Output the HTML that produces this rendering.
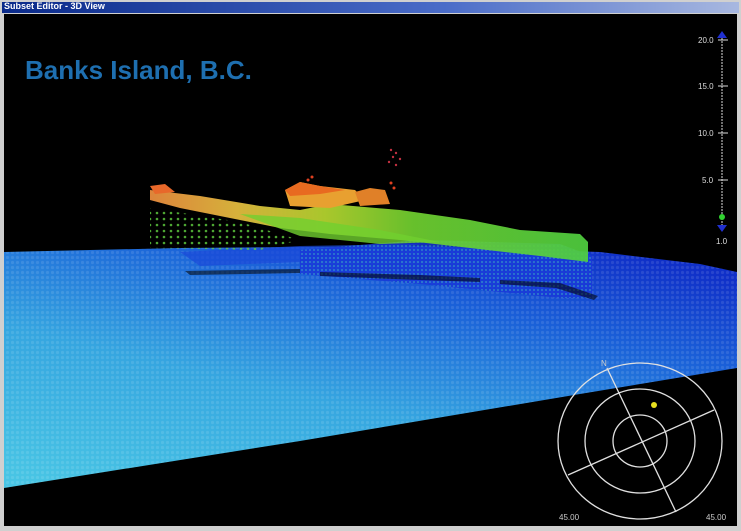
<!DOCTYPE html>
<html><head><style>
html,body{margin:0;padding:0;background:#000;}
.wrap{position:relative;width:741px;height:531px;overflow:hidden;background:#d0d0d0;}
.title{position:absolute;left:2px;top:2px;width:737px;height:11px;background:linear-gradient(90deg,#0a2a8a,#4a6cc8 60%,#a8b8e0);}
.title span{position:absolute;left:2px;top:-1px;font:bold 9px "Liberation Sans",sans-serif;color:#fff;}
svg{position:absolute;left:4px;top:14px;}
</style></head><body><div class="wrap">
<div class="title"><span>Subset Editor - 3D View</span></div>
<svg width="733" height="512" viewBox="4 14 733 512">
<defs>
<linearGradient id="sea" x1="0.1" y1="1" x2="0.8" y2="0">
<stop offset="0" stop-color="#48c4e4"/><stop offset="0.4" stop-color="#36a6e0"/><stop offset="0.75" stop-color="#1a60d8"/><stop offset="1" stop-color="#1030c8"/>
</linearGradient>
<linearGradient id="band" x1="0" y1="0" x2="1" y2="0">
<stop offset="0" stop-color="#f09040"/><stop offset="0.2" stop-color="#e8c040"/><stop offset="0.4" stop-color="#b8d830"/><stop offset="0.6" stop-color="#70d030"/><stop offset="1" stop-color="#50d040"/>
</linearGradient>
<pattern id="dots" width="5" height="5" patternUnits="userSpaceOnUse">
<circle cx="2.5" cy="2.5" r="1.6" fill="#fff" fill-opacity="0.1"/>
</pattern>
<pattern id="gdots" width="7" height="6" patternUnits="userSpaceOnUse">
<circle cx="3" cy="3" r="1.3" fill="#60d040"/>
</pattern>
<pattern id="bdots" width="4" height="4" patternUnits="userSpaceOnUse">
<rect width="4" height="4" fill="#1838d8"/><circle cx="2" cy="2" r="1" fill="#40c0c0" fill-opacity="0.6"/>
</pattern>
</defs>
<rect x="4" y="14" width="733" height="512" fill="#000"/>
<polygon points="4,252 180,248 420,246 600,252 700,264 737,272 737,368 580,394 300,441 4,488" fill="url(#sea)"/>
<polygon points="4,252 180,248 420,246 600,252 700,264 737,272 737,368 580,394 300,441 4,488" fill="url(#dots)"/>
<polygon points="180,252 300,246 420,244 300,262 200,266" fill="#1a48d8" opacity="0.7"/>
<!-- ship body (blue point cloud) -->
<polygon points="300,250 420,240 560,244 592,256 592,298 560,298 420,284 300,274" fill="url(#bdots)" opacity="0.85"/>
<!-- shadow streaks -->
<g fill="#000" opacity="0.55">
<polygon points="185,271 300,269 300,273 190,275"/>
<polygon points="320,272 420,275 480,278 480,282 420,280 320,276"/>
<polygon points="500,280 560,283 598,296 594,300 556,288 500,284"/>
</g>
<!-- sparse green dots under band -->
<polygon points="150,208 240,222 300,240 260,250 150,248" fill="url(#gdots)" opacity="0.8"/>
<!-- main band -->
<polygon points="150,190 200,196 260,206 300,210 330,204 400,210 470,220 520,230 550,232 580,234 588,242 588,262 540,256 470,248 400,240 330,234 280,228 230,218 180,208 150,200" fill="url(#band)" opacity="0.92"/>
<polygon points="240,214 300,218 380,230 440,242 380,244 300,236" fill="#70d030" opacity="0.8"/>
<!-- superstructure -->
<polygon points="285,190 300,182 320,186 355,190 365,200 330,208 290,206" fill="#e8a030"/>
<polygon points="285,190 300,182 320,186 345,190 320,194 290,196" fill="#e86a20"/>
<polygon points="355,192 370,188 385,190 390,204 360,206" fill="#e08028"/>
<polygon points="150,186 165,184 175,192 155,194" fill="#e8682a"/>
<g fill="#c03040"><circle cx="391" cy="150" r="1.2"/><circle cx="396" cy="153" r="1.2"/><circle cx="393" cy="157" r="1.2"/><circle cx="400" cy="159" r="1.2"/><circle cx="389" cy="162" r="1.2"/><circle cx="396" cy="165" r="1.2"/></g>
<g fill="#e04020"><circle cx="308" cy="180" r="1.5"/><circle cx="312" cy="177" r="1.5"/><circle cx="391" cy="183" r="1.5"/><circle cx="394" cy="188" r="1.5"/></g>
<!-- depth scale -->
<g stroke="#ddd" stroke-width="1" fill="#ddd" font-family="Liberation Sans,sans-serif" font-size="8">
<line x1="722" y1="38" x2="722" y2="228" stroke-dasharray="2,1"/>
<line x1="718" y1="40" x2="728" y2="40"/><line x1="718" y1="86" x2="728" y2="86"/>
<line x1="718" y1="133" x2="728" y2="133"/><line x1="718" y1="180" x2="728" y2="180"/>
<text x="698" y="43" stroke="none">20.0</text><text x="698" y="89" stroke="none">15.0</text>
<text x="698" y="136" stroke="none">10.0</text><text x="702" y="183" stroke="none">5.0</text>
<text x="716" y="244" stroke="none">1.0</text>
</g>
<polygon points="717,38 727,38 722,31" fill="#2030d0"/>
<polygon points="717,225 727,225 722,232" fill="#2030d0"/>
<circle cx="722" cy="217" r="3" fill="#30d030"/>
<!-- title text -->
<text x="25" y="79" font-family="Liberation Sans,sans-serif" font-weight="bold" font-size="26" fill="#1e6fb0">Banks Island, B.C.</text>
<!-- compass -->
<g stroke="#e0e0e0" stroke-width="1.3" fill="none">
<ellipse cx="640" cy="441" rx="82" ry="78"/>
<ellipse cx="640" cy="441" rx="55" ry="52"/>
<ellipse cx="640" cy="441" rx="27" ry="26"/>
<line x1="607" y1="368" x2="676" y2="512"/>
<line x1="568" y1="475" x2="714" y2="410"/>
</g>
<circle cx="654" cy="405" r="3" fill="#e8e020"/>
<g fill="#ccc" font-family="Liberation Sans,sans-serif" font-size="8">
<text x="559" y="520">45.00</text><text x="706" y="520">45.00</text><text x="601" y="366">N</text>
</g>
</svg>
</div></body></html>
